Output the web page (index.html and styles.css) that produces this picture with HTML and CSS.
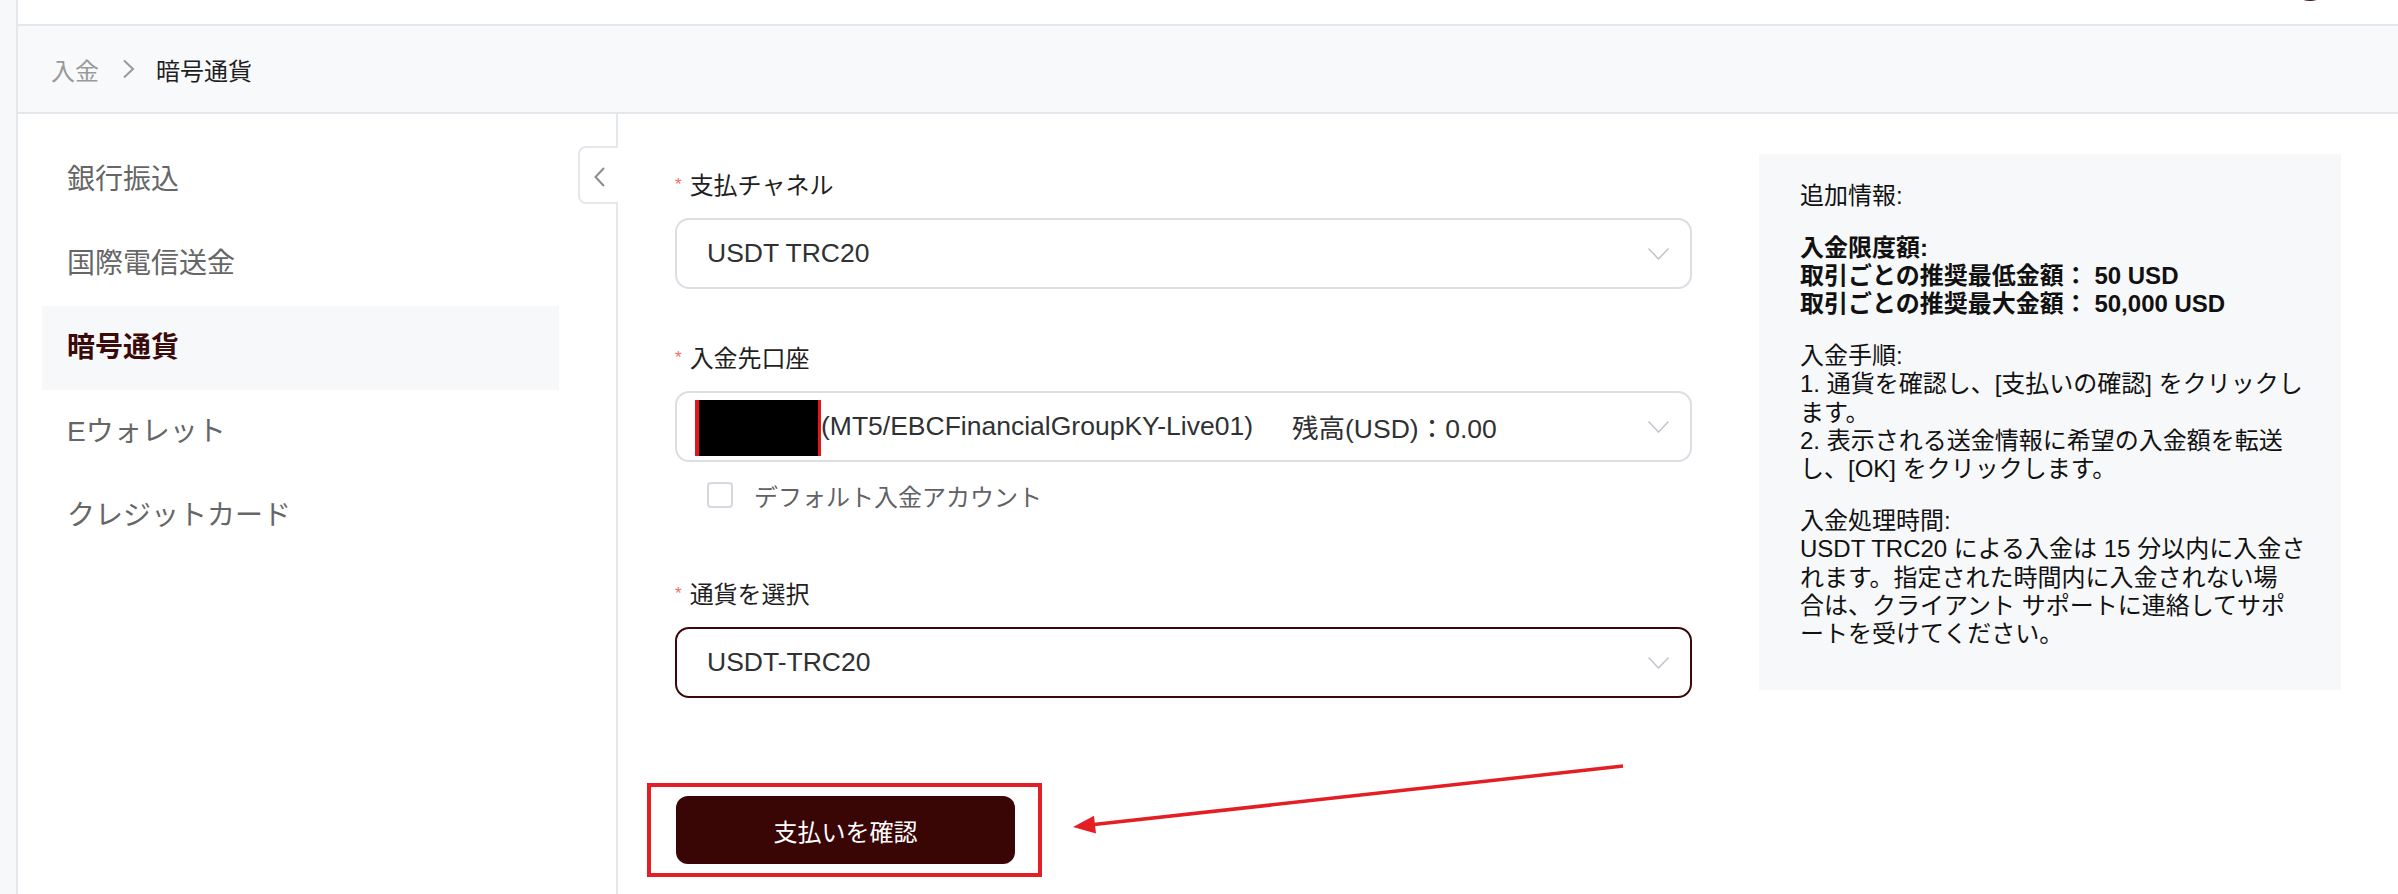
FILE: index.html
```html
<!DOCTYPE html>
<html lang="ja">
  <head>
    <meta charset="utf-8" />
    <title>入金 - 暗号通貨</title>
    <link rel="stylesheet" href="styles.css">
  </head>

  <body>
    <div class="app">
      <div class="rail"></div>

      <div class="page">
        <div class="topbar"><span class="avatar"></span></div>

        <div class="crumbs">
          <span class="crumb-link">入金</span>
          <svg class="crumb-sep" viewBox="0 0 13 20"><path d="M2 1.5 L11 10 L2 18.5" /></svg>
          <span class="crumb-current">暗号通貨</span>
        </div>

        <div class="body">
          <nav class="side">
            <a class="side-item">銀行振込</a>
            <a class="side-item">国際電信送金</a>
            <a class="side-item active">暗号通貨</a>
            <a class="side-item">Eウォレット</a>
            <a class="side-item">クレジットカード</a>
            <div class="collapse">
              <svg viewBox="0 0 11 20"><path d="M10 1 L1.5 10 L10 19" /></svg>
            </div>
          </nav>

          <main class="content">
            <form class="form">
              <div class="field">
                <div class="label"><span class="req">*</span>支払チャネル</div>
                <div class="select">
                  <span class="value">USDT TRC20</span>
                  <svg class="arrow" viewBox="0 0 21 12"><path d="M0.5 0.5 L10.5 11 L20.5 0.5" /></svg>
                </div>
              </div>

              <div class="field">
                <div class="label"><span class="req">*</span>入金先口座</div>
                <div class="select account">
                  <span class="value"><span class="mask"></span>(MT5/EBCFinancialGroupKY-Live01)<span class="balance">残高(USD)：0.00</span></span>
                  <svg class="arrow" viewBox="0 0 21 12"><path d="M0.5 0.5 L10.5 11 L20.5 0.5" /></svg>
                </div>
                <label class="check-row"><span class="check-box"></span>デフォルト入金アカウント</label>
              </div>

              <div class="field">
                <div class="label"><span class="req">*</span>通貨を選択</div>
                <div class="select focus">
                  <span class="value">USDT-TRC20</span>
                  <svg class="arrow" viewBox="0 0 21 12"><path d="M0.5 0.5 L10.5 11 L20.5 0.5" /></svg>
                </div>
              </div>

              <button type="button" class="btn">支払いを確認</button>
            </form>

            <aside class="info">
              <p>追加情報:</p>
              <p class="strong">入金限度額:<br>取引ごとの推奨最低金額： 50 USD<br>取引ごとの推奨最大金額： 50,000 USD</p>
              <p>入金手順:<br>1. 通貨を確認し、[支払いの確認] をクリックし<br>ます。<br>2. 表示される送金情報に希望の入金額を転送<br>し、[OK] をクリックします。</p>
              <p>入金処理時間:<br>USDT TRC20 による入金は 15 分以内に入金さ<br>れます。指定された時間内に入金されない場<br>合は、クライアント サポートに連絡してサポ<br>ートを受けてください。</p>
            </aside>
          </main>
        </div>
      </div>
    </div>

    <!-- screenshot annotation -->
    <svg class="annot" viewBox="0 0 2398 894">
      <rect x="649" y="785" width="391" height="90" />
      <line x1="1623" y1="766" x2="1094" y2="824.6" />
      <polygon points="1073,827 1096,833.5 1094,815.7" />
    </svg>
  </body>
</html>
```

FILE: styles.css
```css
body {
  margin: 0;
  overflow: hidden;
  background-color: #fff;
  font-family: "Liberation Sans", "Noto Sans CJK JP", sans-serif;
  color: #222;
  position: relative;
}
.app {
  display: flex;
  height: 894px;
}
.rail {
  width: 16px;
  flex: none;
  background-color: #f7f8fa;
  border-right: 2px solid #e4e7ec;
}
.page {
  flex: 1;
  display: flex;
  flex-direction: column;
  min-width: 0;
}
.topbar {
  height: 24px;
  flex: none;
  border-bottom: 2px solid #e4e7ec;
  position: relative;
  overflow: hidden;
}
.avatar {
  position: absolute;
  top: -43px;
  right: 66px;
  width: 44px;
  height: 44px;
  border-radius: 50%;
  background-color: #4a0d0d;
}
.crumbs {
  height: 86px;
  flex: none;
  display: flex;
  align-items: center;
  padding-left: 33px;
  background-color: #f8f9fb;
  border-bottom: 2px solid #e4e7ec;
  font-size: 24px;
}
.crumb-link {
  color: #9a9a9a;
}
.crumb-sep {
  width: 13px;
  height: 20px;
  margin: 0 21px 0 23px;
  fill: none;
  stroke: #9a9a9a;
  stroke-width: 2;
}
.crumb-current {
  color: #1f1f1f;
}
.body {
  flex: 1;
  display: flex;
}
.side {
  width: 600px;
  flex: none;
  box-sizing: border-box;
  border-right: 2px solid #e4e7ec;
  padding: 24px 0 0 24px;
  position: relative;
}
.side-item {
  display: block;
  width: 517px;
  height: 84px;
  line-height: 84px;
  box-sizing: border-box;
  padding-left: 25px;
  font-size: 28px;
  color: #666;
}
.side-item.active {
  background-color: #f7f8fa;
  color: #3b0a0a;
  font-weight: bold;
}
.collapse {
  position: absolute;
  top: 32px;
  right: -2px;
  width: 40px;
  height: 58px;
  box-sizing: border-box;
  border: 2px solid #e4e7ec;
  border-right: none;
  border-radius: 8px 0 0 8px;
  background-color: #fff;
  display: flex;
  align-items: center;
  justify-content: center;
}
.collapse svg {
  width: 11px;
  height: 20px;
  margin-top: 4px;
  fill: none;
  stroke: #8c8c8c;
  stroke-width: 2;
}
.content {
  flex: 1;
  display: flex;
  align-items: flex-start;
  gap: 67px;
  padding: 40px 57px 0 57px;
}
.form {
  width: 1017px;
  flex: none;
  display: flex;
  flex-direction: column;
  padding-top: 15px;
}
.field {
  display: flex;
  flex-direction: column;
  margin-bottom: 53px;
}
.label {
  font-size: 24px;
  line-height: 34px;
  color: #1f1f1f;
  margin-bottom: 15px;
}
.req {
  display: inline-block;
  vertical-align: top;
  margin-top: 7px;
  margin-right: 8px;
  font-size: 17px;
  line-height: 17px;
  color: #f56c6c;
}
.select {
  height: 71px;
  box-sizing: border-box;
  border: 2px solid #dcdee3;
  border-radius: 14px;
  display: flex;
  align-items: center;
  padding: 0 21px 0 30px;
  font-size: 26.5px;
  color: #303133;
}
.select.focus {
  border-color: #3a0808;
}
.select.account {
  padding-left: 18px;
}
.value {
  flex: 1;
  display: flex;
  align-items: center;
  white-space: nowrap;
}
.mask {
  width: 126px;
  height: 56px;
  box-sizing: border-box;
  background-color: #000;
  border-left: 4px solid #e3161b;
  border-right: 3px solid #e3161b;
  margin-top: 2px;
}
.balance {
  margin-left: 39px;
}
.arrow {
  width: 21px;
  height: 12px;
  fill: none;
  stroke: #c0c4cc;
  stroke-width: 1.5;
}
.check-row {
  display: flex;
  align-items: center;
  margin: 20px 0 17px 32px;
  height: 26px;
  font-size: 24px;
  color: #606266;
}
.check-box {
  width: 26px;
  height: 26px;
  box-sizing: border-box;
  border: 2px solid #d6d8de;
  border-radius: 4px;
  margin-right: 21px;
}
.btn {
  display: block;
  width: 339px;
  height: 68px;
  margin: 45px 0 0 1px;
  border: none;
  border-radius: 12px;
  background-color: #3a0505;
  color: #fff;
  font-family: inherit;
  font-size: 24px;
}
.info {
  width: 582px;
  flex: none;
  box-sizing: border-box;
  background-color: #f7f8fa;
  padding: 28px 20px 41px 41px;
  font-size: 24px;
  line-height: 28.3px;
  color: #111;
}
.info p {
  margin: 23.5px 0;
  white-space: nowrap;
}
.info p:first-child {
  margin-top: 0;
}
.info p:last-child {
  margin-bottom: 0;
}
.info .strong {
  font-weight: bold;
}
.annot {
  position: absolute;
  top: 0;
  left: 0;
  width: 2398px;
  height: 894px;
  pointer-events: none;
}
.annot rect {
  fill: none;
  stroke: #e31e24;
  stroke-width: 4;
}
.annot line {
  stroke: #e31e24;
  stroke-width: 3.5;
}
.annot polygon {
  fill: #e31e24;
}
```
